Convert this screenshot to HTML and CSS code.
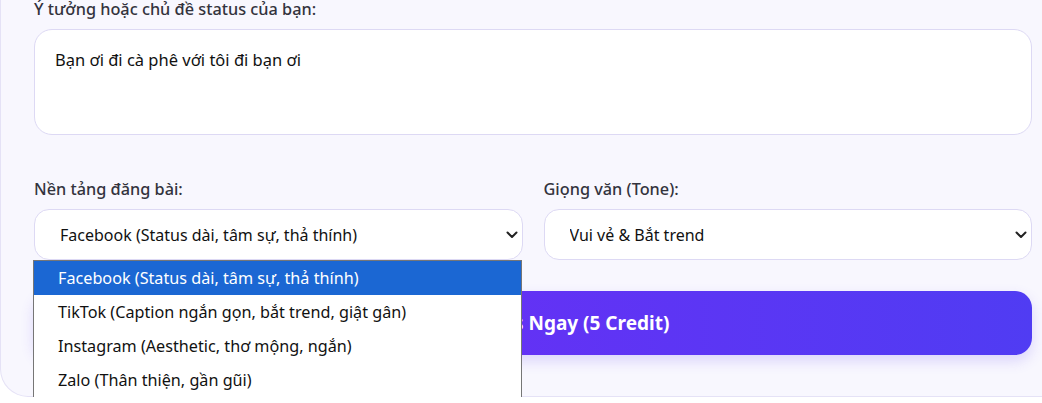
FILE: index.html
```html
<!DOCTYPE html>
<html lang="vi">
<head>
<meta charset="utf-8">
<title>Tạo Status</title>
<link rel="stylesheet" href="styles.css">
</head>
<body>
<div class="card">
  <div class="field">
    <label class="label" for="idea">Ý tưởng hoặc chủ đề status của bạn:</label>
    <textarea id="idea" class="textarea">Bạn ơi đi cà phê với tôi đi bạn ơi</textarea>
  </div>
  <div class="row">
    <div class="field">
      <label class="label" for="platform">Nền tảng đăng bài:</label>
      <div class="select-wrap">
        <select id="platform" class="select">
          <option>Facebook (Status dài, tâm sự, thả thính)</option>
          <option>TikTok (Caption ngắn gọn, bắt trend, giật gân)</option>
          <option>Instagram (Aesthetic, thơ mộng, ngắn)</option>
          <option>Zalo (Thân thiện, gần gũi)</option>
        </select>
        <svg class="chevron" width="12" height="8" viewBox="0 0 12 8"><path d="M1.5 1.5 L6 6 L10.5 1.5" fill="none" stroke="#222" stroke-width="2" stroke-linecap="round" stroke-linejoin="round"/></svg>
        <ul class="dropdown">
          <li class="opt active">Facebook (Status dài, tâm sự, thả thính)</li>
          <li class="opt">TikTok (Caption ngắn gọn, bắt trend, giật gân)</li>
          <li class="opt">Instagram (Aesthetic, thơ mộng, ngắn)</li>
          <li class="opt">Zalo (Thân thiện, gần gũi)</li>
        </ul>
      </div>
    </div>
    <div class="field">
      <label class="label" for="tone">Giọng văn (Tone):</label>
      <div class="select-wrap">
        <select id="tone" class="select">
          <option>Vui vẻ &amp; Bắt trend</option>
        </select>
        <svg class="chevron" width="12" height="8" viewBox="0 0 12 8"><path d="M1.5 1.5 L6 6 L10.5 1.5" fill="none" stroke="#222" stroke-width="2" stroke-linecap="round" stroke-linejoin="round"/></svg>
      </div>
    </div>
  </div>
  <button class="btn" type="button"><svg class="spark" width="22" height="22" viewBox="0 0 24 24"><path d="M12 2 L14 10 L22 12 L14 14 L12 22 L10 14 L2 12 L10 10 Z" fill="#ffe37a"/></svg>Tạo Status Ngay (5 Credit)</button>
</div>
</body>
</html>
```

FILE: styles.css
```css
html, body {
  margin: 0;
  padding: 0;
  background: #ffffff;
  overflow: hidden;
}
body {
  font-family: "Noto Sans", "Open Sans", sans-serif;
  color: #1f1f2b;
}
.card {
  background: #f8f7fe;
  border: 1px solid #e5e2f6;
  border-top: none;
  border-radius: 0 0 28px 28px;
  padding: 0 40px 41px 33px;
  box-sizing: border-box;
  width: calc(100% + 31px);
}
.field {
  display: flex;
  flex-direction: column;
}
.label {
  font-size: 16.3px;
  font-weight: 500;
  line-height: 22px;
  color: #33333d;
  margin-top: -2px;
  margin-bottom: 9px;
}
.textarea {
  height: 106px;
  box-sizing: border-box;
  border: 1px solid #ddd9f4;
  border-radius: 18px;
  background: #fff;
  padding: 19px 20px;
  font-family: inherit;
  font-size: 16.5px;
  line-height: 22px;
  color: #111;
  resize: none;
  outline: none;
}
.row {
  display: grid;
  grid-template-columns: 1fr 1fr;
  gap: 21px;
  margin-top: 45px;
}
.select-wrap {
  position: relative;
}
.select {
  appearance: none;
  -webkit-appearance: none;
  width: 100%;
  height: 51px;
  box-sizing: border-box;
  border: 1px solid #ddd9f4;
  border-radius: 15px;
  background: #fff;
  padding: 0 25px;
  font-family: inherit;
  font-size: 16px;
  color: #111;
  outline: none;
}
.chevron {
  position: absolute;
  right: 5px;
  top: 22px;
}
.dropdown {
  position: absolute;
  left: -1px;
  top: 51px;
  width: 489px;
  box-sizing: border-box;
  margin: 0;
  padding: 0;
  list-style: none;
  background: #fff;
  border: 1px solid #767676;
  z-index: 5;
}
.opt {
  height: 34px;
  line-height: 34px;
  padding-left: 24px;
  font-size: 16.2px;
  color: #111;
  white-space: nowrap;
}
.opt.active {
  background: #1b67d3;
  color: #fff;
}
.btn {
  display: flex;
  align-items: center;
  justify-content: center;
  width: 100%;
  height: 64px;
  margin-top: 31px;
  border: none;
  border-radius: 17px;
  background: linear-gradient(90deg, #7429f6 0%, #503cf3 100%);
  color: #fff;
  font-family: inherit;
  font-size: 19px;
  font-weight: 700;
  box-shadow: 0 6px 14px rgba(90, 60, 240, 0.18);
}
.spark {
  margin-right: 7px;
}
```
